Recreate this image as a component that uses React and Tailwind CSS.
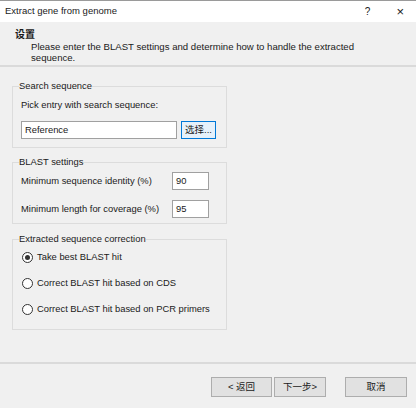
const font = { fontFamily: '"Liberation Sans", "Noto Sans CJK SC", sans-serif' };

const Radio = ({ checked, label }) => (
  <div className="flex items-center h-[26px]">
    <span className="w-[11px] h-[11px] rounded-full border border-[#333] bg-white flex items-center justify-center ml-[3px]">
      {checked && <span className="w-[5px] h-[5px] rounded-full bg-[#333]" />}
    </span>
    <span className="ml-[4px]">{label}</span>
  </div>
);

const Btn = ({ children, className = "" }) => (
  <button
    className={
      "h-[20px] border border-[#adadad] bg-[#e1e1e1] text-[9.5px] flex items-center justify-center " +
      className
    }
  >
    {children}
  </button>
);

export default function App() {
  return (
    <div
      className="w-[416px] h-[408px] bg-[#f0f0f0] text-[9.4px] text-[#1a1a1a] flex flex-col overflow-hidden"
      style={font}
    >
      {/* title bar */}
      <div className="h-[22px] bg-white flex items-center border-t border-[#9a9a9a] shrink-0">
        <span className="ml-[5px] text-[9.5px]">Extract gene from genome</span>
        <span className="ml-auto mr-[26px] text-[10px]">?</span>
        <span className="mr-[12px] text-[13px] font-light leading-none">×</span>
      </div>

      {/* header */}
      <div className="h-[45px] bg-[#f0f0f0] border-b-2 border-[#dadada] shrink-0 pt-[7px]">
        <div className="ml-[15px] font-bold text-[10px] leading-[12px]">设置</div>
        <div className="ml-[31px] leading-[11px] text-[9.6px]">
          Please enter the BLAST settings and determine how to handle the extracted
          <br />
          sequence.
        </div>
      </div>

      {/* body */}
      <div className="flex-1 px-[12px] pt-[13px]">
        <fieldset className="w-[215px] h-[68px] border border-[#dcdcdc] pl-[6px] pr-[8px]">
          <legend className="leading-[12px] px-0">Search sequence</legend>
          <div className="ml-[2px] mt-[7px] leading-[12px]">Pick entry with search sequence:</div>
          <div className="flex items-center mt-[10px] ml-[2px]">
            <div className="w-[156px] h-[18px] bg-white border border-[#a0a0a0] flex items-center pl-[3px]">
              Reference
            </div>
            <button className="ml-[4px] w-[35px] h-[18px] border border-[#0078d7] bg-[#e5f1fb] text-[9.5px] flex items-center justify-center">
              选择...
            </button>
          </div>
        </fieldset>

        <fieldset className="mt-[8px] w-[215px] h-[68px] border border-[#dcdcdc] pl-[6px] pr-[8px]">
          <legend className="leading-[12px] px-0">BLAST settings</legend>
          <div className="flex items-center mt-[4px] ml-[2px]">
            <span>Minimum sequence identity (%)</span>
            <div className="ml-auto mr-[9px] w-[37px] h-[18px] bg-white border border-[#a0a0a0] flex items-center pl-[3px]">
              90
            </div>
          </div>
          <div className="flex items-center mt-[10px] ml-[2px]">
            <span>Minimum length for coverage (%)</span>
            <div className="ml-auto mr-[9px] w-[37px] h-[18px] bg-white border border-[#a0a0a0] flex items-center pl-[3px]">
              95
            </div>
          </div>
        </fieldset>

        <fieldset className="mt-[9px] w-[215px] h-[97px] border border-[#dcdcdc] pl-[6px] pr-[8px]">
          <legend className="leading-[12px] px-0">Extracted sequence correction</legend>
          <div className="mt-[-1px]">
            <Radio checked label="Take best BLAST hit" />
            <Radio label="Correct BLAST hit based on CDS" />
            <Radio label="Correct BLAST hit based on PCR primers" />
          </div>
        </fieldset>
      </div>

      {/* footer */}
      <div className="h-[46px] border-t-2 border-[#dadada] shrink-0 flex items-start pt-[13px]">
        <Btn className="ml-[211px] w-[61px]">&lt; 返回</Btn>
        <Btn className="ml-[2px] w-[52px]">下一步&gt;</Btn>
        <Btn className="ml-[19px] w-[62px]">取消</Btn>
      </div>
    </div>
  );
}
